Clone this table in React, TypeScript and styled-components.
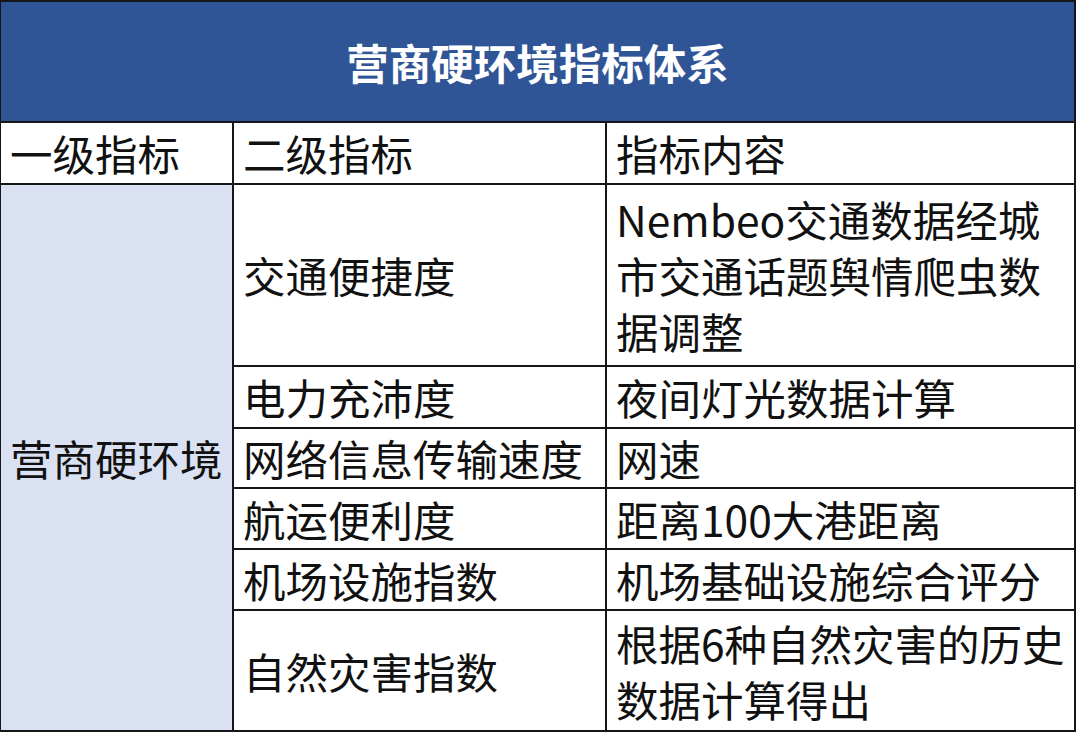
import React from "react";
import styled, { createGlobalStyle } from "styled-components";

const GlobalStyle = createGlobalStyle`
  html, body {
    margin: 0;
    padding: 0;
    background: #ffffff;
  }
  body {
    font-family: "Noto Sans CJK SC", "Noto Sans", sans-serif;
    color: #111;
  }
`;

const Sheet = styled.div`
  display: grid;
  grid-template-columns: 231px 371px 467px;
  grid-template-rows: 119px 60px 180px 60px 58px 59px 59px 119px;
  gap: 2px;
  width: max-content;
  padding: 2px 2px 2px 1px;
  background: #161616;
`;

const Title = styled.div`
  grid-column: 1 / span 3;
  background: #2f5597;
  color: #ffffff;
  font-weight: 700;
  font-size: 42.5px;
  display: flex;
  align-items: center;
  justify-content: center;
`;

const Cell = styled.div<{ $fill?: string; $span?: number }>`
  background: ${(p) => p.$fill || "#ffffff"};
  grid-row: ${(p) => (p.$span ? `span ${p.$span}` : "auto")};
  display: flex;
  align-items: center;
  padding-left: 9px;
  font-size: 42.5px;
  line-height: 56px;
  white-space: nowrap;
`;

const rows: { name: string; content: string[] }[] = [
  {
    name: "交通便捷度",
    content: ["Nembeo交通数据经城", "市交通话题舆情爬虫数", "据调整"],
  },
  { name: "电力充沛度", content: ["夜间灯光数据计算"] },
  { name: "网络信息传输速度", content: ["网速"] },
  { name: "航运便利度", content: ["距离100大港距离"] },
  { name: "机场设施指数", content: ["机场基础设施综合评分"] },
  { name: "自然灾害指数", content: ["根据6种自然灾害的历史", "数据计算得出"] },
];

export default function App() {
  return (
    <>
      <GlobalStyle />
      <Sheet>
        <Title>营商硬环境指标体系</Title>
        <Cell>一级指标</Cell>
        <Cell>二级指标</Cell>
        <Cell>指标内容</Cell>
        {rows.map((r, i) => (
          <React.Fragment key={r.name}>
            {i === 0 && (
              <Cell $fill="#d9e1f2" $span={rows.length}>
                营商硬环境
              </Cell>
            )}
            <Cell>{r.name}</Cell>
            <Cell>
              <div>
                {r.content.map((line, j) => (
                  <div key={j}>{line}</div>
                ))}
              </div>
            </Cell>
          </React.Fragment>
        ))}
      </Sheet>
    </>
  );
}
